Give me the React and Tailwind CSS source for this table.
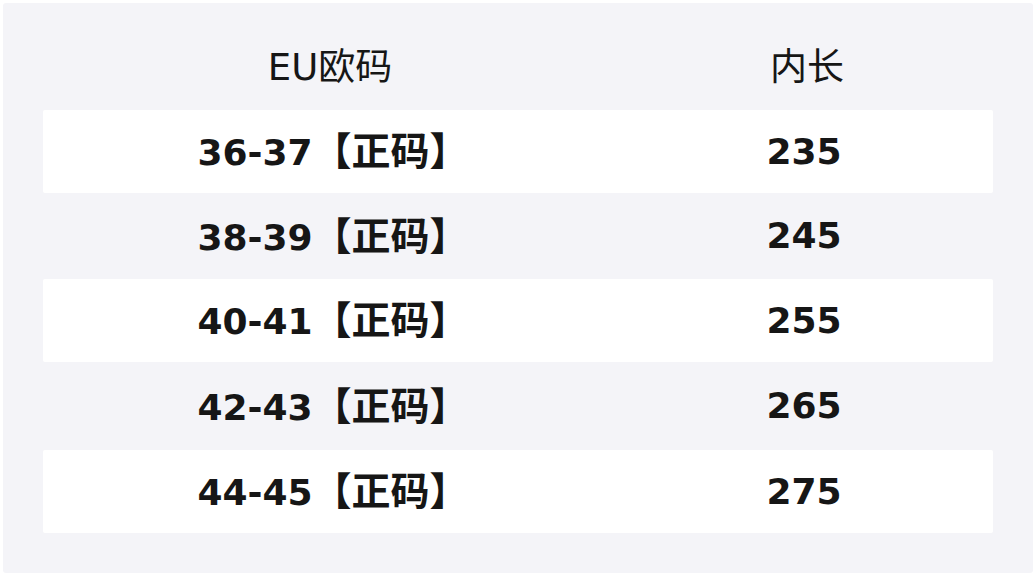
export default function App() {
  const rows = [
    ["36-37", "235", "bg-white rounded-[2px] h-[83px]"],
    ["38-39", "245", "h-[86px]"],
    ["40-41", "255", "bg-white rounded-[2px] h-[83px]"],
    ["42-43", "265", "h-[88px]"],
    ["44-45", "275", "bg-white rounded-[2px] h-[83px]"],
  ];
  const font = { fontFamily: '"DejaVu Sans", "Noto Sans CJK SC", sans-serif' };
  return (
    <div className="w-[1036px] h-[578px] bg-white pt-[3px] pl-[3px]" style={font}>
      <div className="w-[1030px] h-[570px] bg-[#f4f4f8] rounded-[3px] px-[40px] pt-[40px]">
        <div className="grid grid-cols-[574px_1fr] h-[67px] pb-[18px] items-center text-[37px] text-[#161616]">
          <div className="text-center leading-none">EU欧码</div>
          <div className="text-center leading-none pl-[4px]">内长</div>
        </div>
        {rows.map(([eu, len, cls]) => (
          <div
            key={eu}
            className={"grid grid-cols-[574px_1fr] items-center text-[36px] font-bold text-[#161616] " + cls}
          >
            <div className="text-center leading-none pl-[6px]">
              {eu}
              <span className="text-[39px]">【正码】</span>
            </div>
            <div className="text-center leading-none pr-[2px]">{len}</div>
          </div>
        ))}
      </div>
    </div>
  );
}
